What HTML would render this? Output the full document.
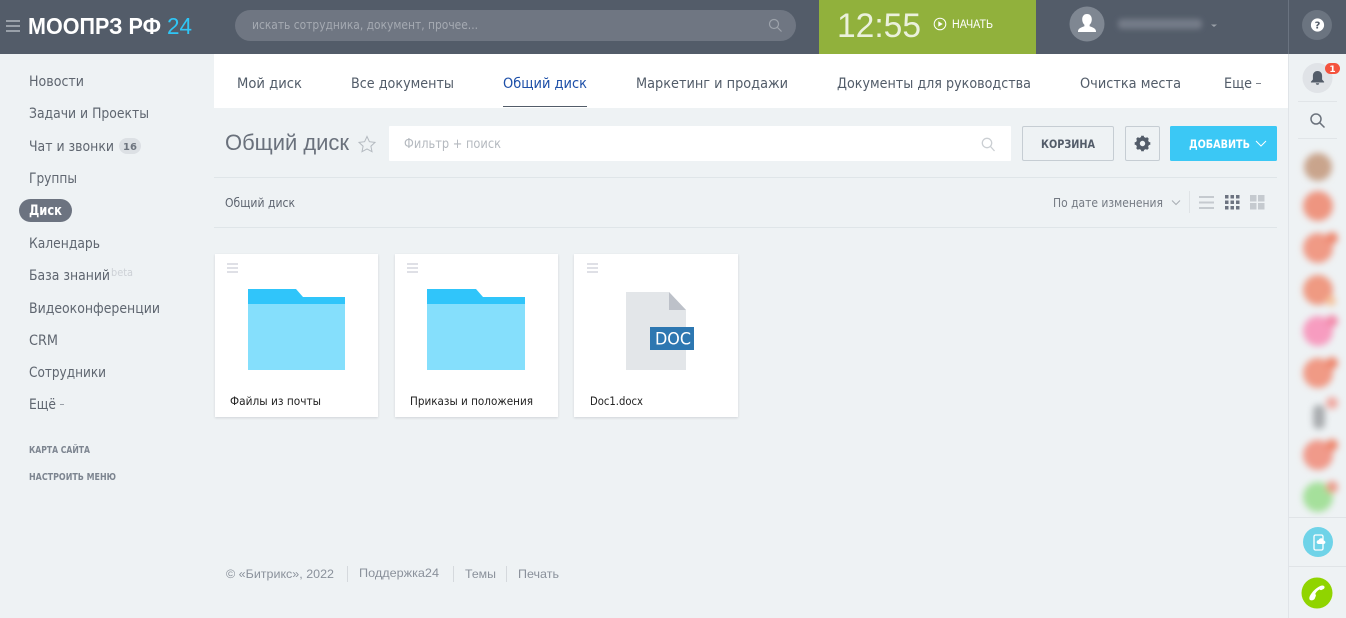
<!DOCTYPE html>
<html lang="ru"><head><meta charset="utf-8"><title>Общий диск</title>
<style>
html,body{margin:0;padding:0;width:1346px;height:618px;overflow:hidden;background:#eef2f4}
svg{display:block;position:absolute;left:0;top:0}
text{font-family:"DejaVu Sans","Liberation Sans",sans-serif;white-space:pre}
.n{font-size:14.5px;fill:#5f6670}
.t{font-size:14.5px;fill:#525c69}
.a{font-family:"Liberation Sans",sans-serif;font-size:12px;fill:#8a919b}
.c{font-size:11.5px;fill:#222}
.s{font-size:9.5px;font-weight:bold;fill:#7d8590}
</style></head><body>
<svg width="1346" height="618" viewBox="0 0 1346 618" xmlns="http://www.w3.org/2000/svg">
<defs><filter id="b" x="-50%" y="-50%" width="200%" height="200%"><feGaussianBlur stdDeviation="3.4"/></filter>
<filter id="b2" x="-50%" y="-50%" width="200%" height="200%"><feGaussianBlur stdDeviation="2.6"/></filter>
<filter id="sh" x="-10%" y="-10%" width="120%" height="120%"><feGaussianBlur stdDeviation="1.2"/></filter></defs>
<rect width="1346" height="618" fill="#eef2f4"/>

<!-- header -->
<rect width="1346" height="54" fill="#535c69"/>
<g fill="#99a0a9"><rect x="6" y="20" width="14" height="2"/><rect x="6" y="25" width="14" height="2"/><rect x="6" y="30" width="14" height="2"/></g>
<text x="28" y="34" style="font-family:'Liberation Sans',sans-serif" font-size="23px" font-weight="bold" fill="#fff" textLength="133" lengthAdjust="spacingAndGlyphs">МООПРЗ РФ</text>
<text x="167" y="34" style="font-family:'Liberation Sans',sans-serif" font-size="23px" fill="#2fc6f6" textLength="25" lengthAdjust="spacingAndGlyphs">24</text>
<rect x="235" y="10" width="561" height="31" rx="15.5" fill="#6f7682"/>
<text x="252" y="29" font-size="12.5px" fill="#a5aab2" textLength="226" lengthAdjust="spacingAndGlyphs">искать сотрудника, документ, прочее...</text>
<g fill="none" stroke="#9da3ab" stroke-width="1.2"><circle cx="774" cy="24" r="4.5"/><path d="M777.5 27.5l4 4"/></g>
<rect x="819" y="0" width="217" height="54" fill="#91b13c"/>
<text x="837" y="37" style="font-family:'Liberation Sans',sans-serif;font-weight:normal" font-size="34px" fill="#fff" fill-opacity=".82" textLength="84" lengthAdjust="spacingAndGlyphs">12:55</text>
<circle cx="940" cy="24" r="5.8" fill="none" stroke="#fff" stroke-width="1"/><path d="M938.3 21.2l4.4 2.8-4.4 2.800z" fill="#fff"/>
<text x="952" y="28" style="font-family:'Liberation Sans',sans-serif" font-size="11.5px" fill="#fff" textLength="41" lengthAdjust="spacingAndGlyphs">НАЧАТЬ</text>
<circle cx="1087" cy="24" r="17.5" fill="#7f8792"/>
<path d="M1087 14c3.2 0 4.8 2.4 4.8 5.4 0 2.2-.9 4.2-2.2 5.3v1.6c2.600 1.100 6.400 1.900 6.400 5.200v.5h-18v-.5c0-3.300 3.800-4.100 6.400-5.200v-1.600c-1.300-1.100-2.200-3.100-2.200-5.300 0-3 1.600-5.400 4.800-5.400z" fill="#fff"/>
<rect x="1118" y="19" width="84" height="10" rx="4" fill="#747c88" filter="url(#b2)"/>
<path d="M1211 24.500h6l-3 2.500z" fill="#9aa0a8"/>
<rect x="1288" y="0" width="1" height="54" fill="#6a7380"/>
<circle cx="1317" cy="25" r="15" fill="#6b7480"/>
<circle cx="1317.500" cy="25" r="6.600" fill="#fff"/>
<text x="1317.500" y="28.600" text-anchor="middle" font-size="10px" font-weight="bold" fill="#535c69">?</text>

<!-- right panel -->
<rect x="1288" y="54" width="1" height="564" fill="#e0e4e8"/>
<circle cx="1317.500" cy="78" r="15" fill="#e0e3e7"/>
<path d="M1317.500 71c-3 0-4.600 2.200-4.600 5v3.500l-2 2.200v.8h13.200v-.8l-2-2.200V76c0-2.800-1.600-5-4.600-5zM1315.800 83.200h3.400c0 1-.7 1.600-1.700 1.600s-1.700-.6-1.700-1.600z" fill="#535c69"/>
<rect x="1325" y="63" width="15" height="11" rx="5.500" fill="#f4533e"/>
<text x="1332.500" y="72" text-anchor="middle" font-size="9px" font-weight="bold" fill="#fff">1</text>
<rect x="1298" y="101" width="39" height="1" fill="#e1e5e8"/>
<g fill="none" stroke="#6b727c" stroke-width="1.500"><circle cx="1316" cy="119" r="5"/><path d="M1319.800 122.800l4.700 4.700"/></g>
<rect x="1298" y="138" width="39" height="1" fill="#e1e5e8"/>
<g filter="url(#b)">
<circle cx="1318" cy="167" r="14" fill="#c9a48c"/>
<circle cx="1318" cy="206" r="15" fill="#ee9580"/>
<circle cx="1318" cy="248" r="15" fill="#f09a85"/><circle cx="1332" cy="238" r="6" fill="#ee8870"/>
<circle cx="1318" cy="290" r="15" fill="#ef9a82"/><circle cx="1331" cy="301" r="5" fill="#f5c29b"/>
<circle cx="1318" cy="331" r="15" fill="#f79cc0"/><circle cx="1332" cy="321" r="6" fill="#f38bab"/>
<circle cx="1318" cy="373" r="15" fill="#f09a85"/><circle cx="1332" cy="363" r="6" fill="#ee8870"/>
<rect x="1313" y="405" width="12" height="24" rx="5" fill="#a9acaf"/><circle cx="1332" cy="403" r="6" fill="#f0a8a0"/>
<circle cx="1318" cy="455" r="15" fill="#f09a8a"/><circle cx="1332" cy="445" r="6" fill="#ee8870"/>
<circle cx="1318" cy="497" r="15" fill="#a5e09b"/><circle cx="1332" cy="487" r="6" fill="#eb9c8c"/>
</g>
<rect x="1289" y="517" width="57" height="1" fill="#e0e4e7"/>
<circle cx="1318" cy="542" r="15" fill="#6fd3e8"/>
<rect x="1314" y="535" width="9" height="15" rx="1.500" fill="none" stroke="#fff" stroke-width="1.300"/>
<path d="M1319 544c-1.800 0-2.600-1.100-2.300-2.400.3-1 1-1.500 2-1.500.5-1.300 1.600-2 2.800-1.800 1.300.2 2 1.200 2.100 2.200 1.200.2 1.900 1 1.800 2-.1 1-.9 1.500-2 1.500z" fill="#fff"/>
<rect x="1289" y="566" width="57" height="1" fill="#e0e4e7"/>
<circle cx="1317" cy="593" r="15.500" fill="#90d400"/>
<path d="M1310 600c-1-1-.8-2.700 0-4.200 2-3.800 5.800-7.800 10.200-9.800 1.500-.7 3-.7 3.800 0 .9.900.7 2.400-.5 3l-2 1c-.8.300-1.500 0-1.900-.6-1.800 1-3.400 2.600-4.400 4.600.6.500.9 1.200.6 2l-1.100 2.800c-.7 1.400-3.100 2.100-4.700 1.200z" fill="#fff"/>

<!-- sidebar -->
<text class="n" x="29" y="86" textLength="55" lengthAdjust="spacingAndGlyphs">Новости</text>
<text class="n" x="29" y="118" textLength="120" lengthAdjust="spacingAndGlyphs">Задачи и Проекты</text>
<text class="n" x="29" y="151" textLength="85" lengthAdjust="spacingAndGlyphs">Чат и звонки</text>
<rect x="119" y="138" width="22" height="16" rx="8" fill="#dce0e4"/>
<text x="130" y="150" text-anchor="middle" font-size="10px" font-weight="bold" fill="#6d747e">16</text>
<text class="n" x="29" y="183" textLength="48" lengthAdjust="spacingAndGlyphs">Группы</text>
<rect x="19" y="199" width="53" height="23" rx="11.500" fill="#6c7380"/>
<text x="29" y="215" font-size="14.500px" font-weight="bold" fill="#fff" textLength="33" lengthAdjust="spacingAndGlyphs">Диск</text>
<text class="n" x="29" y="248" textLength="71" lengthAdjust="spacingAndGlyphs">Календарь</text>
<text class="n" x="29" y="280" textLength="81" lengthAdjust="spacingAndGlyphs">База знаний</text>
<text x="111" y="276" font-size="11px" fill="#cdd1d6" textLength="22" lengthAdjust="spacingAndGlyphs">beta</text>
<text class="n" x="29" y="313" textLength="131" lengthAdjust="spacingAndGlyphs">Видеоконференции</text>
<text class="n" x="29" y="345" textLength="29" lengthAdjust="spacingAndGlyphs">CRM</text>
<text class="n" x="29" y="377" textLength="77" lengthAdjust="spacingAndGlyphs">Сотрудники</text>
<text class="n" x="29" y="409" textLength="27" lengthAdjust="spacingAndGlyphs">Ещё</text>
<rect x="60" y="404" width="4" height="1" fill="#9aa0a8"/>
<text class="s" x="29" y="453" textLength="61" lengthAdjust="spacingAndGlyphs">КАРТА САЙТА</text>
<text class="s" x="29" y="480" textLength="87" lengthAdjust="spacingAndGlyphs">НАСТРОИТЬ МЕНЮ</text>

<!-- tabs -->
<rect x="214" y="54" width="1074" height="54" fill="#fff"/>
<text class="t" x="237" y="88" textLength="65" lengthAdjust="spacingAndGlyphs">Мой диск</text>
<text class="t" x="351" y="88" textLength="103" lengthAdjust="spacingAndGlyphs">Все документы</text>
<text class="t" x="503" y="88" style="fill:#1d4fa8" textLength="84" lengthAdjust="spacingAndGlyphs">Общий диск</text>
<rect x="503" y="106" width="84" height="1" fill="#525c69"/>
<text class="t" x="636" y="88" textLength="152" lengthAdjust="spacingAndGlyphs">Маркетинг и продажи</text>
<text class="t" x="837" y="88" textLength="194" lengthAdjust="spacingAndGlyphs">Документы для руководства</text>
<text class="t" x="1080" y="88" textLength="101" lengthAdjust="spacingAndGlyphs">Очистка места</text>
<text class="t" x="1224" y="88" textLength="28" lengthAdjust="spacingAndGlyphs">Еще</text>
<rect x="1256" y="83" width="5" height="1" fill="#7d838c"/>

<!-- toolbar -->
<text x="225" y="150" font-size="22px" fill="#6a717c" style="font-family:'Liberation Sans',sans-serif" textLength="124" lengthAdjust="spacingAndGlyphs">Общий диск</text>
<path d="M367 136.500l2.400 5.200 5.600.7-4.100 3.800 1.100 5.500-5-2.800-5 2.800 1.100-5.500-4.100-3.800 5.600-.7z" fill="none" stroke="#b4bac0" stroke-width="1"/>
<rect x="389" y="126" width="622" height="35" rx="1" fill="#fff"/>
<text x="404" y="148" font-size="13px" fill="#b4b9bf" textLength="97" lengthAdjust="spacingAndGlyphs">Фильтр + поиск</text>
<g fill="none" stroke="#cbcfd3" stroke-width="1.300"><circle cx="987" cy="143" r="4.700"/><path d="M990.500 146.500l4 4.500"/></g>
<rect x="1022.500" y="126.500" width="91" height="34" rx="1.500" fill="#eef2f4" stroke="#c6cdd3"/>
<text x="1041" y="148" font-size="11.500px" font-weight="bold" fill="#535c69" textLength="54" lengthAdjust="spacingAndGlyphs">КОРЗИНА</text>
<rect x="1125.500" y="126.500" width="34" height="34" rx="1.500" fill="#eef2f4" stroke="#c6cdd3"/>
<g transform="translate(1142.500 143.500)"><circle r="4.600" fill="none" stroke="#535c69" stroke-width="3.800"/><g stroke="#535c69" stroke-width="2.800"><path d="M0-7.800V-5M0 5V7.800M-7.800 0H-5M5 0H7.800M-5.500-5.500l1.900 1.900M3.600 3.600l1.900 1.900M-5.500 5.500l1.900-1.900M3.600-3.600l1.900-1.900"/></g></g>
<rect x="1170" y="126" width="107" height="35" rx="1.500" fill="#3bc8f5"/>
<text x="1189" y="148" font-size="11.500px" font-weight="bold" fill="#fff" textLength="61" lengthAdjust="spacingAndGlyphs">ДОБАВИТЬ</text>
<path d="M1256 141l5 5 5-5" fill="none" stroke="#fff" stroke-width="1"/>
<rect x="214" y="177" width="1063" height="1" fill="#dfe5e8"/>
<rect x="214" y="227" width="1063" height="1" fill="#dfe5e8"/>
<text x="225" y="207" font-size="12px" fill="#5e6570" textLength="70" lengthAdjust="spacingAndGlyphs">Общий диск</text>
<text x="1053" y="207" font-size="12px" fill="#747a83" textLength="110" lengthAdjust="spacingAndGlyphs">По дате изменения</text>
<path d="M1172 200.500l4 4 4-4" fill="none" stroke="#a8adb3" stroke-width="1"/>
<rect x="1189" y="191" width="1" height="22" fill="#dfe3e6"/>
<g fill="#c5cacf"><rect x="1199" y="196" width="15" height="2"/><rect x="1199" y="201.500" width="15" height="2"/><rect x="1199" y="207" width="15" height="2"/></g>
<g fill="#6c7380"><rect x="1225" y="195" width="3.500" height="3.500"/><rect x="1230.500" y="195" width="3.500" height="3.500"/><rect x="1236" y="195" width="3.500" height="3.500"/><rect x="1225" y="200.500" width="3.500" height="3.500"/><rect x="1230.500" y="200.500" width="3.500" height="3.500"/><rect x="1236" y="200.500" width="3.500" height="3.500"/><rect x="1225" y="206" width="3.500" height="3.500"/><rect x="1230.500" y="206" width="3.500" height="3.500"/><rect x="1236" y="206" width="3.500" height="3.500"/></g>
<g fill="#c5cacf"><rect x="1250" y="195" width="6.500" height="6.500"/><rect x="1258" y="195" width="6.500" height="6.500"/><rect x="1250" y="203" width="6.500" height="6.500"/><rect x="1258" y="203" width="6.500" height="6.500"/></g>

<!-- cards -->
<g fill="#cfd3d8" filter="url(#sh)"><rect x="215" y="255" width="163" height="163"/><rect x="395" y="255" width="163" height="163"/><rect x="574" y="255" width="164" height="163"/></g>
<g fill="#fff"><rect x="215" y="254" width="163" height="163"/><rect x="395" y="254" width="163" height="163"/><rect x="574" y="254" width="164" height="163"/></g>
<g fill="#dfe0e6">
<rect x="227" y="263" width="11" height="2"/><rect x="227" y="267" width="11" height="2"/><rect x="227" y="271" width="11" height="2"/>
<rect x="407" y="263" width="11" height="2"/><rect x="407" y="267" width="11" height="2"/><rect x="407" y="271" width="11" height="2"/>
<rect x="587" y="263" width="11" height="2"/><rect x="587" y="267" width="11" height="2"/><rect x="587" y="271" width="11" height="2"/>
</g>
<path d="M248 304h97v66h-97z" fill="#85dffc"/>
<path d="M248 304v-15h48l7 8h42v7z" fill="#30c5fa"/>
<path d="M427 304h98v66h-98z" fill="#85dffc"/>
<path d="M427 304v-15h49l7 8h42v7z" fill="#30c5fa"/>
<path d="M626 292h43l17 18v60h-60z" fill="#e3e6e9"/>
<path d="M669 292l17 18h-17z" fill="#bdc1c9"/>
<rect x="650" y="327" width="44" height="23" fill="#2d77b1"/>
<text x="655" y="344.500" font-size="16.500px" fill="#fff" textLength="36" lengthAdjust="spacingAndGlyphs">DOC</text>
<text class="c" x="230" y="405" textLength="91" lengthAdjust="spacingAndGlyphs">Файлы из почты</text>
<text class="c" x="410" y="405" textLength="123" lengthAdjust="spacingAndGlyphs">Приказы и положения</text>
<text class="c" x="590" y="405" textLength="53" lengthAdjust="spacingAndGlyphs">Doc1.docx</text>

<!-- footer -->
<text class="a" x="226" y="578" textLength="108" lengthAdjust="spacingAndGlyphs">© «Битрикс», 2022</text>
<rect x="347" y="566" width="1" height="16" fill="#d5d9dd"/>
<text class="a" x="359" y="577" textLength="80" lengthAdjust="spacingAndGlyphs">Поддержка24</text>
<rect x="453" y="566" width="1" height="16" fill="#d5d9dd"/>
<text class="a" x="465" y="578" textLength="31" lengthAdjust="spacingAndGlyphs">Темы</text>
<rect x="506" y="566" width="1" height="16" fill="#d5d9dd"/>
<text class="a" x="518" y="578" textLength="41" lengthAdjust="spacingAndGlyphs">Печать</text>
</svg>
</body></html>
